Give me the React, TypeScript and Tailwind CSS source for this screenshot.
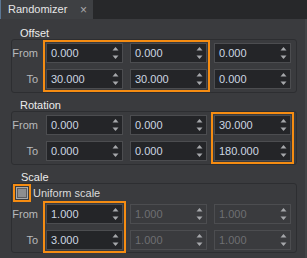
import React from "react";

const ORANGE = "border-[#f58c12]";

function Spinner() {
  return (
    <svg width="7" height="14" viewBox="0 0 7 14" className="shrink-0">
      <polygon points="0.5,4.5 3.5,1 6.5,4.5" fill="#a6a8ab" />
      <polygon points="0.5,9.5 6.5,9.5 3.5,13" fill="#a6a8ab" />
    </svg>
  );
}

type FieldProps = {
  value: string;
  pos: string;
  disabled?: boolean;
};

function Field({ value, pos, disabled }: FieldProps) {
  return (
    <div
      className={
        pos +
        " flex items-center h-[20px] border pl-[4px] pr-[3px] " +
        (disabled
          ? "bg-transparent border-[#4c4d50] text-[#6e6f72]"
          : "bg-[#242528] border-[#4c4d50] text-[#cdd7e2]")
      }
    >
      <span className="flex-1 leading-none">{value}</span>
      <Spinner />
    </div>
  );
}

function Label({ text, pos }: { text: string; pos: string }) {
  return (
    <div className={pos + " flex items-center justify-end pr-[1px] text-[#b8b9bb]"}>
      {text}
    </div>
  );
}

function Group({ title, children }: { title: string; children: React.ReactNode }) {
  return (
    <div className="flex flex-col">
      <div className="h-[12px] leading-[12px] pl-[20px] text-[#ececec]">{title}</div>
      <div className="ml-[11px] w-[286px] border border-[#2d2e31] rounded-[3px] pt-[3px] pb-[3px]">
        {children}
      </div>
    </div>
  );
}

const gridCls =
  "grid grid-cols-[27px_77px_77px_77px] grid-rows-[20px_20px] gap-x-[7px] gap-y-[6px]";

export default function App() {
  return (
    <div className="w-[307px] h-[258px] overflow-hidden bg-[#3a3b3e] flex flex-col text-[11px] font-['Liberation_Sans','Noto_Sans',sans-serif]">
      {/* tab strip */}
      <div className="h-[19px] shrink-0 flex bg-[#27282a]">
        <div className="w-[93px] h-full bg-[#3e4043] border-l border-[#5b7693] flex items-center justify-between pl-[7px] pr-[6px] text-[#e6e6e6]">
          <span>Randomizer</span>
          <span className="text-[#a9aaac] text-[12px]">×</span>
        </div>
      </div>

      <div className="flex-1 flex flex-col pt-[8px] gap-[6px] border-r-2 border-[#434447]">
        <Group title="Offset">
          <div className={gridCls}>
            <Label text="From" pos="col-start-1 row-start-1" />
            <Label text="To" pos="col-start-1 row-start-2" />
            <Field value="0.000" pos="col-start-2 row-start-1" />
            <Field value="0.000" pos="col-start-3 row-start-1" />
            <Field value="0.000" pos="col-start-4 row-start-1" />
            <Field value="30.000" pos="col-start-2 row-start-2" />
            <Field value="30.000" pos="col-start-3 row-start-2" />
            <Field value="0.000" pos="col-start-4 row-start-2" />
            <div className={"col-start-2 col-end-4 row-start-1 row-end-3 -m-[3px] border-2 pointer-events-none " + ORANGE} />
          </div>
        </Group>

        <Group title="Rotation">
          <div className={gridCls}>
            <Label text="From" pos="col-start-1 row-start-1" />
            <Label text="To" pos="col-start-1 row-start-2" />
            <Field value="0.000" pos="col-start-2 row-start-1" />
            <Field value="0.000" pos="col-start-3 row-start-1" />
            <Field value="30.000" pos="col-start-4 row-start-1" />
            <Field value="0.000" pos="col-start-2 row-start-2" />
            <Field value="0.000" pos="col-start-3 row-start-2" />
            <Field value="180.000" pos="col-start-4 row-start-2" />
            <div className={"col-start-4 col-end-5 row-start-1 row-end-3 -m-[3px] border-2 pointer-events-none " + ORANGE} />
          </div>
        </Group>

        <div className="flex flex-col">
          <div className="h-[12px] leading-[12px] pl-[21px] text-[#ececec]">Scale</div>
          <div className="ml-[11px] w-[286px] border border-[#2d2e31] rounded-[3px] pb-[2px]">
            <div className="h-[18px] flex items-center ml-[1px]">
              <span className={"w-[18px] h-[18px] border-2 flex items-center justify-center " + ORANGE}>
                <span className="w-[12px] h-[12px] border border-[#a8a9ab] bg-[#5c5d60] p-[1px] flex">
                  <span className="flex-1 bg-[#8d8e90]" />
                </span>
              </span>
              <span className="ml-[2px] text-[#dadada]">Uniform scale</span>
            </div>
            <div className={gridCls + " mt-[2px]"}>
              <Label text="From" pos="col-start-1 row-start-1" />
              <Label text="To" pos="col-start-1 row-start-2" />
              <Field value="1.000" pos="col-start-2 row-start-1" />
              <Field value="1.000" pos="col-start-3 row-start-1" disabled />
              <Field value="1.000" pos="col-start-4 row-start-1" disabled />
              <Field value="3.000" pos="col-start-2 row-start-2" />
              <Field value="1.000" pos="col-start-3 row-start-2" disabled />
              <Field value="1.000" pos="col-start-4 row-start-2" disabled />
              <div className={"col-start-2 col-end-3 row-start-1 row-end-3 -m-[3px] border-2 pointer-events-none " + ORANGE} />
            </div>
          </div>
        </div>
      </div>
    </div>
  );
}
